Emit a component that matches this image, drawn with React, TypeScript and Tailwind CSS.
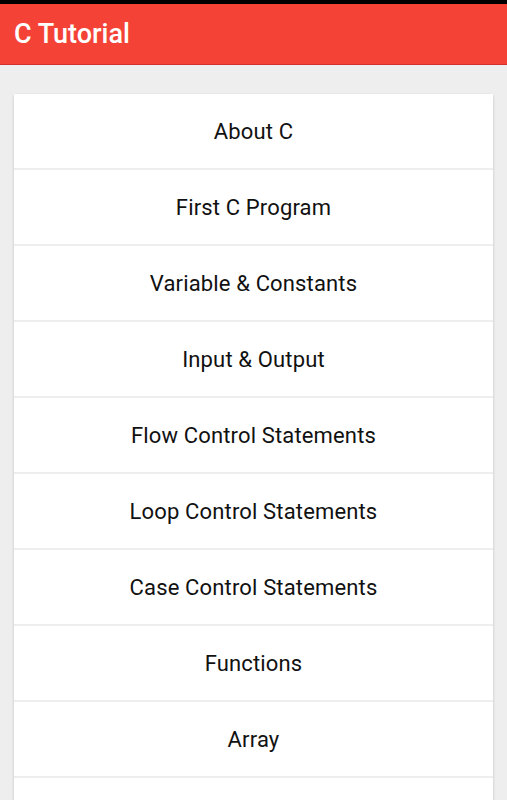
import React from 'react';

const topics = [
  'About C',
  'First C Program',
  'Variable & Constants',
  'Input & Output',
  'Flow Control Statements',
  'Loop Control Statements',
  'Case Control Statements',
  'Functions',
  'Array',
  'Pointers',
];

const App: React.FC = () => {
  return (
    <div className="h-[800px] overflow-hidden bg-[#eeeeee]" style={{ fontFamily: 'Roboto, "Noto Sans", sans-serif' }}>
      {/* status bar */}
      <div className="h-[4px] bg-black" />

      {/* toolbar */}
      <div className="flex h-[61px] items-center border-b border-[#d32f2f] bg-[#f44336] px-[14px]">
        <h1 className="text-[27px] font-medium leading-none text-white">C Tutorial</h1>
      </div>

      {/* topics list */}
      <div className="px-[14px] pt-[29px]">
        <div className="flex flex-col gap-[2px] rounded-[2px] bg-[#eeeeee] shadow-[0_1px_3px_rgba(0,0,0,0.2)]">
          {topics.map((t) => (
            <button
              key={t}
              className="flex h-[74px] items-center justify-center bg-white text-[22px] tracking-[0.15px] text-[#111111]"
            >
              {t}
            </button>
          ))}
        </div>
      </div>
    </div>
  );
};

export default App;
